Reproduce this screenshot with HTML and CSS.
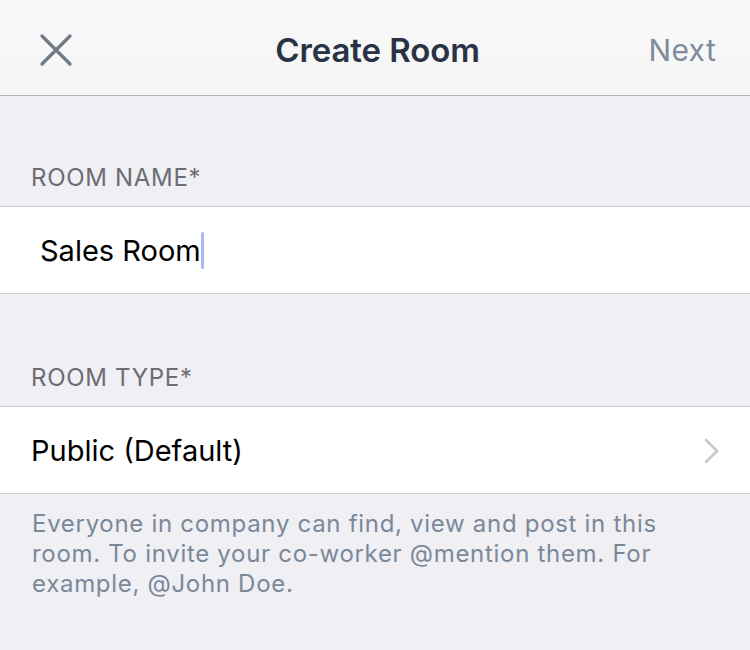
FILE: index.html
```html
<!DOCTYPE html>
<html lang="en">
<head>
    <meta charset="UTF-8">
    <title>Create Room</title>
    <meta name="viewport" content="width=device-width, initial-scale=1.0">
    <link rel="stylesheet" href="styles.css">
</head>
<body>
    <!-- navigation bar -->
    <div class="nav-bar">
        <button class="nav-close" aria-label="Close">
            <svg width="34" height="34" viewBox="0 0 34 34">
                <path d="M3 3 L31 31 M31 3 L3 31" stroke="#6f7a86" stroke-width="3.2" stroke-linecap="round" fill="none"/>
            </svg>
        </button>
        <div class="nav-title">Create Room</div>
        <button class="nav-next">Next</button>
    </div>

    <!-- room name -->
    <div class="section-label">ROOM NAME*</div>
    <div class="cell cell-input">
        <span class="input-text">Sales Room</span><span class="caret"></span>
    </div>

    <!-- room type -->
    <div class="section-label section-label-tall">ROOM TYPE*</div>
    <div class="cell cell-select">
        <span class="cell-text">Public (Default)</span>
        <svg class="chevron" width="16" height="26" viewBox="0 0 16 26">
            <path d="M2 2 L13 13 L2 24" stroke="#c7c7cc" stroke-width="2.6" stroke-linecap="round" stroke-linejoin="round" fill="none"/>
        </svg>
    </div>
    <p class="section-note">Everyone in company can find, view and post in this room. To invite your co-worker @mention them. For example, @John Doe.</p>
</body>
</html>
```

FILE: styles.css
```css
:root {
    --page-bg: #efeff4;
    --separator: #c8c7cc;
    --label-color: #6d6d72;
    --note-color: #7b8899;
}

* {
    box-sizing: border-box;
}

body {
    margin: 0;
    font-family: Inter, "Noto Sans", sans-serif;
    background: var(--page-bg);
    color: #000;
    width: 750px;
    height: 650px;
    overflow: hidden;
}

.nav-bar {
    height: 96px;
    display: grid;
    grid-template-columns: 1fr auto 1fr;
    align-items: center;
    padding: 4px 34px 0 39px;
    background: linear-gradient(#f9f9f9, #f5f5f5);
    border-bottom: 1px solid #b2b2b2;
}

.nav-close {
    background: none;
    border: none;
    padding: 0;
    width: 34px;
    height: 34px;
    display: flex;
}

.nav-title {
    font-size: 33px;
    font-weight: 600;
    color: #2a3346;
    letter-spacing: -0.1px;
}

.nav-next {
    justify-self: end;
    background: none;
    border: none;
    padding: 0;
    font-family: inherit;
    font-size: 30px;
    letter-spacing: 0.3px;
    color: #7e8b9a;
}

.section-label {
    height: 110px;
    display: flex;
    align-items: flex-end;
    padding: 0 31px 14px;
    font-size: 24px;
    color: var(--label-color);
    letter-spacing: 0.7px;
}

.section-label-tall {
    height: 112px;
}

.cell {
    background: #fff;
    border-top: 1px solid var(--separator);
    border-bottom: 1px solid var(--separator);
    display: flex;
    align-items: center;
}

.cell-input {
    height: 88px;
    padding-left: 40px;
}

.input-text {
    font-size: 29px;
}

.caret {
    width: 3px;
    height: 37px;
    border-radius: 2px;
    background: #a9b8f2;
}

.cell-select {
    height: 88px;
    padding: 0 30px 0 31px;
    justify-content: space-between;
}

.cell-text {
    font-size: 29px;
}

.chevron {
    margin-top: 2px;
}

.section-note {
    margin: 0;
    padding: 15px 80px 0 32px;
    font-size: 24px;
    line-height: 30px;
    letter-spacing: 0.7px;
    color: var(--note-color);
}
```
